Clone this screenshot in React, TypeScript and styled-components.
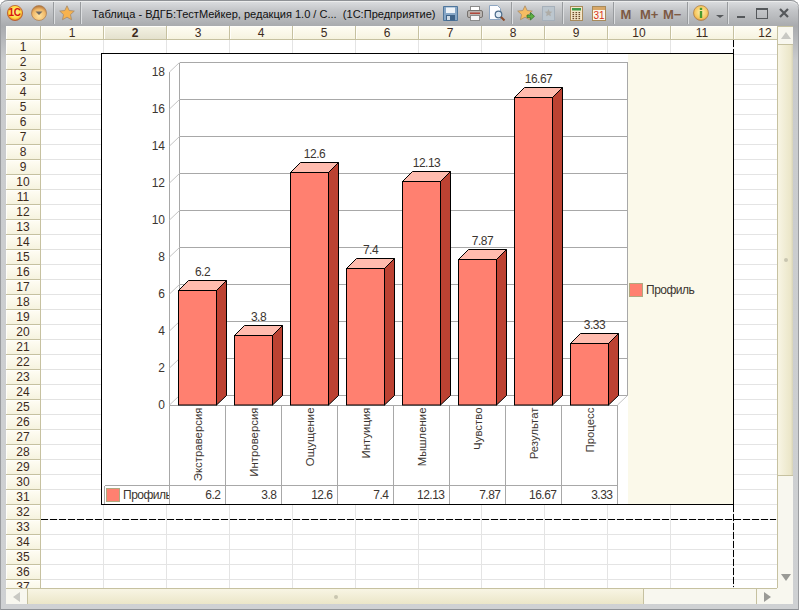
import React from "react";
import styled, { createGlobalStyle } from "styled-components";

const Global = createGlobalStyle`
  html, body { margin: 0; padding: 0; background: #fff; width: 799px; height: 610px; overflow: hidden; }
  #root { width: 799px; height: 610px; }
`;

const Window = styled.div`
  width: 799px;
  height: 610px;
  box-sizing: border-box;
  display: flex;
  flex-direction: column;
  border-radius: 8px 8px 0 0;
  overflow: hidden;
  background: linear-gradient(180deg, #dfe1e3 0, #c4c6c9 10px, #a9abae 26px, #c9cbcd 60px, #cfd1d3 100%);
  box-shadow: inset 0 1px 0 #8f9296, inset 0 2px 0 #eceded, inset 1px 0 0 #9a9c9f, inset -1px 0 0 #9a9c9f, inset 0 -1px 0 #8f9296;
  font-family: "Liberation Sans", Arial, sans-serif;
`;

const TitleBar = styled.div`
  height: 26px;
  flex: none;
  display: flex;
  align-items: center;
  position: relative;
`;

const Slot = styled.div<{ $ml: number; $w: number }>`
  flex: none;
  margin-left: ${(p) => p.$ml}px;
  width: ${(p) => p.$w}px;
  height: 22px;
  display: flex;
  align-items: center;
  justify-content: center;
`;

const Separator = styled.div<{ $ml: number }>`
  flex: none;
  margin-left: ${(p) => p.$ml}px;
  width: 1px;
  height: 22px;
  background: #989b9e;
  box-shadow: 1px 0 0 #dcdee0;
`;

const Title = styled.div`
  flex: none;
  margin-left: 10px;
  width: 352px;
  font-size: 11.05px;
  color: #101010;
  white-space: pre;
  padding-top: 2px;
  text-indent: 1px;
`;

const MemButton = styled.div<{ $ml: number; $w: number }>`
  flex: none;
  margin-left: ${(p) => p.$ml}px;
  width: ${(p) => p.$w}px;
  font-size: 13px;
  font-weight: 700;
  color: #7d5a44;
  text-align: center;
  white-space: nowrap;
  padding-top: 2px;
`;

const Body = styled.div`
  flex: 1;
  display: flex;
  flex-direction: column;
  margin: 0 6px 6px;
  min-height: 0;
`;

const MainRow = styled.div`
  flex: none;
  height: 562px;
  display: flex;
`;

const Viewport = styled.div`
  position: relative;
  width: 771px;
  height: 562px;
  overflow: hidden;
  background: #fff;
  flex: none;
`;

const GridRow = styled.div<{ $h: number }>`
  display: flex;
  height: ${(p) => p.$h}px;
`;

const Head = styled.div<{ $w: number; $active?: boolean }>`
  flex: none;
  box-sizing: border-box;
  width: ${(p) => p.$w}px;
  display: flex;
  align-items: center;
  justify-content: center;
  border-right: 1px solid #c6c1a0;
  border-bottom: 1px solid #c6c1a0;
  background: ${(p) =>
    p.$active
      ? "linear-gradient(180deg, #f4f2e4, #e4e1cd)"
      : "linear-gradient(180deg, #fffdf4, #f6f3df)"};
  box-shadow: inset 1px 1px 0 #fffef9;
  color: #3c2a1c;
  font-size: 12px;
  font-weight: ${(p) => (p.$active ? 700 : 400)};
  line-height: 1;
`;

const Cell = styled.div`
  flex: none;
  box-sizing: border-box;
  width: 63px;
  border-right: 1px solid #e4e4e4;
  border-bottom: 1px solid #e4e4e4;
`;

const ChartFrame = styled.div`
  position: absolute;
  left: 95px;
  top: 27px;
  width: 633px;
  height: 452px;
  box-sizing: border-box;
  border: 1px solid #000;
  background: #fff;
`;

const ChartSvg = styled.svg`
  display: block;
  width: 631px;
  height: 450px;
  font-family: "Liberation Sans", Arial, sans-serif;
`;

const Label = styled.text`
  font-size: 12px;
  letter-spacing: -0.5px;
  fill: #3b3530;
`;

const NameLabel = styled(Label)`
  font-size: 11.4px;
  letter-spacing: 0;
`;

const AxisLabel = styled(Label)`
  letter-spacing: 0;
`;

const DashH = styled.div`
  position: absolute;
  left: 35px;
  top: 493px;
  width: 735px;
  height: 1px;
  background: repeating-linear-gradient(90deg, #000 0 7px, transparent 7px 9px);
`;

const DashV = styled.div<{ $top: number; $h: number }>`
  position: absolute;
  left: 727px;
  top: ${(p) => p.$top}px;
  height: ${(p) => p.$h}px;
  width: 1px;
  background: repeating-linear-gradient(180deg, #000 0 7px, transparent 7px 9px);
`;

const VScroll = styled.div`
  flex: none;
  width: 16px;
  display: flex;
  flex-direction: column;
  background: #f8f7ef;
  border-left: 1px solid #c6c1a0;
  box-sizing: border-box;
`;

const HScroll = styled.div`
  flex: none;
  width: 771px;
  height: 16px;
  display: flex;
  background: #f8f7ef;
  border-top: 1px solid #c6c1a0;
  box-sizing: border-box;
`;

const Corner = styled.div`
  flex: none;
  width: 16px;
  height: 16px;
  background: #f8f7ef;
`;

const BottomRow = styled.div`
  display: flex;
  height: 16px;
  flex: none;
`;

const ScrollBtn = styled.div<{ $size: number; $vertical?: boolean }>`
  flex: none;
  ${(p) => (p.$vertical ? `height: ${p.$size}px;` : `width: ${p.$size}px;`)}
  display: flex;
  align-items: center;
  justify-content: center;
  box-sizing: border-box;
  background: #f8f7ef;
`;

const HThumb = styled.div`
  flex: none;
  width: 617px;
  display: flex;
  align-items: center;
  justify-content: center;
  box-sizing: border-box;
  border-left: 1px solid #c6c1a0;
  border-right: 1px solid #c6c1a0;
  background: linear-gradient(180deg, #f8f5e4, #ebe6c8);
`;

const VThumb = styled.div`
  flex: none;
  height: 432px;
  display: flex;
  align-items: center;
  justify-content: center;
  box-sizing: border-box;
  border-top: 1px solid #c6c1a0;
  border-bottom: 1px solid #c6c1a0;
  background: linear-gradient(90deg, #f8f5e4, #ebe6c8 85%, #d6d2b8);
`;

const Track = styled.div`
  flex: 1;
  background: #f8f7ef;
`;

const BtnEnd = styled(ScrollBtn)<{ $side: "left" | "top" }>`
  border-${(p) => p.$side}: 1px solid #c6c1a0;
`;

const Grip = styled.div`
  width: 4px;
  height: 4px;
  border-radius: 50%;
  background: #c9c6b0;
`;

const Arrow = styled.div<{ $dir: "up" | "down" | "left" | "right" }>`
  width: 0;
  height: 0;
  ${(p) =>
    p.$dir === "up"
      ? "border-left:5px solid transparent;border-right:5px solid transparent;border-bottom:7px solid #c9c9c4;"
      : p.$dir === "down"
      ? "border-left:5px solid transparent;border-right:5px solid transparent;border-top:7px solid #9a9a96;"
      : p.$dir === "left"
      ? "border-top:5px solid transparent;border-bottom:5px solid transparent;border-right:7px solid #c9c9c4;"
      : "border-top:5px solid transparent;border-bottom:5px solid transparent;border-left:7px solid #9a9a96;"}
`;

const RedLogoText = styled.text`
  font-size: 10px;
  font-weight: 700;
  letter-spacing: -0.5px;
  fill: #d8140f;
  font-family: "Liberation Sans", Arial, sans-serif;
`;

const CalText = styled.text`
  font-size: 10px;
  font-weight: 400;
  fill: #d8301a;
  font-family: "Liberation Sans", Arial, sans-serif;
`;

/* ---------- icons ---------- */
const Logo = () => (
  <svg width="16" height="16" viewBox="0 0 16 16">
    <defs>
      <radialGradient id="lg" cx="50%" cy="45%" r="55%">
        <stop offset="0" stopColor="#fff59a" />
        <stop offset="0.72" stopColor="#ffd840" />
        <stop offset="1" stopColor="#d8641e" />
      </radialGradient>
    </defs>
    <circle cx="8" cy="8" r="7.6" fill="url(#lg)" stroke="#b8501c" strokeWidth="0.7" />
    <RedLogoText x="1.6" y="11.4">1С</RedLogoText>
  </svg>
);

const MenuOrb = () => (
  <svg width="16" height="16" viewBox="0 0 16 16">
    <defs>
      <radialGradient id="mo" cx="50%" cy="70%" r="65%">
        <stop offset="0" stopColor="#ffe3a0" />
        <stop offset="0.7" stopColor="#f0b868" />
        <stop offset="1" stopColor="#b87a3e" />
      </radialGradient>
    </defs>
    <circle cx="8" cy="8" r="7.5" fill="url(#mo)" stroke="#a87a50" strokeWidth="0.7" />
    <path d="M4.5 6.5h7L8 10z" fill="#6e6a66" />
  </svg>
);

const Star = ({ fill = "#f6b24e", stroke = "#a68a6a" }: { fill?: string; stroke?: string }) => (
  <svg width="16" height="16" viewBox="0 0 16 16">
    <path
      d="M8 .8l2.2 4.7 5.1.6-3.8 3.5 1 5.1L8 12.2l-4.5 2.5 1-5.1L.7 6.1l5.1-.6z"
      fill={fill}
      stroke={stroke}
      strokeWidth="0.8"
    />
  </svg>
);

const StarArrow = () => (
  <svg width="18" height="17" viewBox="0 0 18 17">
    <path
      d="M8 .8l2.2 4.7 5.1.6-3.8 3.5 1 5.1L8 12.2l-4.5 2.5 1-5.1L.7 6.1l5.1-.6z"
      fill="#f6bc62"
      stroke="#a68a6a"
      strokeWidth="0.8"
    />
    <path d="M10 10h3.5V7.6l4 3.7-4 3.7v-2.4H10z" fill="#5cb040" stroke="#2e6e24" strokeWidth="0.7" />
  </svg>
);

const DisabledStar = () => (
  <svg width="13" height="15" viewBox="0 0 13 15">
    <rect x="0.5" y="0.5" width="12" height="14" fill="#bcc6ce" stroke="#a6b0ba" />
    <path d="M6.5 3l1.1 2.5 2.7.3-2 1.8.5 2.7-2.3-1.3-2.3 1.3.5-2.7-2-1.8 2.7-.3z" fill="#aeaca6" />
  </svg>
);

const Floppy = () => (
  <svg width="15" height="15" viewBox="0 0 15 15">
    <path d="M.5.5h14v14H.5z" fill="#86a6c6" stroke="#4f769c" />
    <rect x="3" y="1.5" width="9" height="5.5" fill="#eef3f8" />
    <rect x="3" y="9" width="9" height="5.5" fill="#3f6388" />
    <rect x="4" y="10" width="3" height="4" fill="#cfdbe6" />
  </svg>
);

const Printer = () => (
  <svg width="16" height="15" viewBox="0 0 16 15">
    <rect x="3.5" y="0.5" width="9" height="5" fill="#fff" stroke="#8b8b8b" />
    <rect x="0.5" y="4.5" width="15" height="7" rx="1.5" fill="#b9b4b0" stroke="#76716d" />
    <rect x="3" y="6.5" width="10" height="1.5" fill="#b0473a" />
    <rect x="3.5" y="9.5" width="9" height="5" fill="#f6f6f6" stroke="#8b8b8b" />
  </svg>
);

const Preview = () => (
  <svg width="17" height="16" viewBox="0 0 17 16">
    <path d="M.5.5h8l3 3v11H.5z" fill="#fdfdff" stroke="#8ea6c2" />
    <circle cx="9.5" cy="9.5" r="3.3" fill="#dfeaf5" stroke="#4a6a8a" strokeWidth="1.2" />
    <path d="M12 12l3.5 3.5" stroke="#8a4a2a" strokeWidth="2" />
  </svg>
);

const Calculator = () => (
  <svg width="13" height="15" viewBox="0 0 13 15">
    <rect x="0.5" y="0.5" width="12" height="14" fill="#f5e6c8" stroke="#a88a5a" />
    <rect x="2" y="2" width="9" height="2.5" fill="#3f9a4a" />
    {[0, 1, 2, 3].map((r) =>
      [0, 1, 2].map((c) => (
        <rect key={`${r}${c}`} x={2.5 + c * 3} y={6 + r * 2} width="1.6" height="1.2" fill="#6a4a2a" />
      ))
    )}
  </svg>
);

const Calendar = () => (
  <svg width="14" height="15" viewBox="0 0 14 15">
    <rect x="0.5" y="0.5" width="13" height="14" fill="#fbf6e8" stroke="#a88a5a" />
    <rect x="1" y="1" width="12" height="3" fill="#d8a868" />
    <CalText x="1.5" y="13.4">31</CalText>
  </svg>
);

const Info = () => (
  <svg width="16" height="16" viewBox="0 0 16 16">
    <defs>
      <radialGradient id="inf" cx="50%" cy="45%" r="60%">
        <stop offset="0" stopColor="#fff2b0" />
        <stop offset="0.7" stopColor="#f6c65e" />
        <stop offset="1" stopColor="#c8843a" />
      </radialGradient>
    </defs>
    <circle cx="8" cy="8" r="7.5" fill="url(#inf)" stroke="#ab7a42" strokeWidth="0.7" />
    <rect x="6.8" y="2.8" width="2.4" height="2.2" fill="#4a9a2e" />
    <rect x="6.8" y="6" width="2.4" height="7" fill="#4a9a2e" />
  </svg>
);

const DownTriangle = () => (
  <svg width="8" height="10" viewBox="0 0 8 10">
    <path d="M0 7h8L4 10z" fill="#55585b" />
  </svg>
);

const MinGlyph = () => (
  <svg width="8" height="11" viewBox="0 0 8 11">
    <rect x="0" y="8" width="8" height="2" fill="#55585b" />
  </svg>
);

const MaxGlyph = () => (
  <svg width="12" height="11" viewBox="0 0 12 11">
    <rect x="0.5" y="0.5" width="11" height="10" fill="none" stroke="#55585b" />
    <rect x="0.5" y="0.5" width="11" height="1.5" fill="#55585b" />
  </svg>
);

const CloseGlyph = () => (
  <svg width="10" height="10" viewBox="0 0 10 10">
    <path d="M1 1l8 8M9 1l-8 8" stroke="#55585b" strokeWidth="2.2" />
  </svg>
);

/* ---------- chart ---------- */
const data = [
  { name: "Экстраверсия", value: 6.2 },
  { name: "Интроверсия", value: 3.8 },
  { name: "Ощущение", value: 12.6 },
  { name: "Интуиция", value: 7.4 },
  { name: "Мышление", value: 12.13 },
  { name: "Чувство", value: 7.87 },
  { name: "Результат", value: 16.67 },
  { name: "Процесс", value: 3.33 },
];

const GRID = "#a8a8a8";
const FRONT_Y = 405;
const UNIT = 18.5;
const barTop = (v: number) => Math.round(FRONT_Y - v * UNIT) + 0.5;

const Chart = () => (
  <ChartSvg viewBox="102 54 631 450">
    <rect x="628" y="54" width="105" height="450" fill="#fbf9ea" />
    <g stroke={GRID} fill="none" shapeRendering="crispEdges">
      {Array.from({ length: 10 }, (_, i) => (
        <path key={i} d={`M179.5 ${395.5 - i * 37}H627.5`} />
      ))}
      <path d="M179.5 62.5V395.5M627.5 62.5V395.5M169.5 72V405" />
      <path d="M104.5 485.5H617.5M104.5 485.5V504" />
      {Array.from({ length: 9 }, (_, i) => (
        <path key={i} d={`M${169.5 + i * 56} 405V504`} />
      ))}
      <path d="M169.5 405.5H617.5" />
    </g>
    <g stroke="#c4c4c4" fill="none">
      {Array.from({ length: 10 }, (_, i) => (
        <path key={i} d={`M169.5 ${405 - i * 37}L179.5 ${395.5 - i * 37}`} />
      ))}
      <path d="M617.5 405L627.5 395.5" />
    </g>
    {Array.from({ length: 10 }, (_, i) => (
      <AxisLabel key={i} x="165" y={409 - i * 37} textAnchor="end">
        {i * 2}
      </AxisLabel>
    ))}
    {data.map((d, i) => {
      const x = 178.5 + 56 * i;
      const top = barTop(d.value);
      return (
        <g key={d.name} stroke="#000" strokeWidth="1">
          <path
            d={`M${x + 38} ${top}L${x + 48} ${top - 10}V${395.5}L${x + 38} ${FRONT_Y}z`}
            fill="#bc4232"
          />
          <path
            d={`M${x} ${top}L${x + 10} ${top - 10}H${x + 48}L${x + 38} ${top}z`}
            fill="#ffbbae"
          />
          <rect x={x} y={top} width="38" height={FRONT_Y - top} fill="#ff8070" />
        </g>
      );
    })}
    {data.map((d, i) => (
      <Label key={d.name} x={202.5 + 56 * i} y={barTop(d.value) - 14.5} textAnchor="middle">
        {d.value}
      </Label>
    ))}
    {data.map((d, i) => (
      <NameLabel
        key={d.name}
        transform={`translate(${202 + 56 * i} 407.5) rotate(-90)`}
        textAnchor="end"
      >
        {d.name}
      </NameLabel>
    ))}
    <rect x="106.5" y="488.5" width="13" height="13" fill="#ff8070" stroke="#b0a880" />
    <clipPath id="legendClip">
      <rect x="120" y="486" width="49" height="18" />
    </clipPath>
    <Label x="123" y="499" clipPath="url(#legendClip)">
      Профиль
    </Label>
    {data.map((d, i) => (
      <Label key={d.name} x={220.5 + 56 * i} y="499" textAnchor="end">
        {d.value}
      </Label>
    ))}
    <rect x="629.5" y="283.5" width="13" height="13" fill="#ff8070" stroke="#b0a880" />
    <Label x="646" y="293.5">
      Профиль
    </Label>
  </ChartSvg>
);

const cols = Array.from({ length: 12 }, (_, i) => i + 1);
const rows = Array.from({ length: 37 }, (_, i) => i + 1);

export default function App() {
  return (
    <Window>
      <Global />
      <TitleBar>
        <Slot $ml={7} $w={16}><Logo /></Slot>
        <Slot $ml={8} $w={16}><MenuOrb /></Slot>
        <Separator $ml={6} />
        <Slot $ml={5} $w={16}><Star /></Slot>
        <Separator $ml={5} />
        <Title>{"Таблица - ВДГБ:ТестМейкер, редакция 1.0 / С...  (1С:Предприятие)"}</Title>
        <Slot $ml={0} $w={15}><Floppy /></Slot>
        <Slot $ml={9} $w={16}><Printer /></Slot>
        <Slot $ml={6} $w={17}><Preview /></Slot>
        <Separator $ml={5} />
        <Slot $ml={5} $w={18}><StarArrow /></Slot>
        <Slot $ml={7} $w={13}><DisabledStar /></Slot>
        <Separator $ml={7} />
        <Slot $ml={7} $w={13}><Calculator /></Slot>
        <Slot $ml={9} $w={14}><Calendar /></Slot>
        <Separator $ml={7} />
        <MemButton $ml={5} $w={14}>M</MemButton>
        <MemButton $ml={7} $w={18}>M+</MemButton>
        <MemButton $ml={5} $w={18}>M−</MemButton>
        <Separator $ml={6} />
        <Slot $ml={5} $w={16}><Info /></Slot>
        <Slot $ml={7} $w={8}><DownTriangle /></Slot>
        <Separator $ml={3} />
        <Slot $ml={9} $w={8}><MinGlyph /></Slot>
        <Slot $ml={11} $w={12}><MaxGlyph /></Slot>
        <Slot $ml={11} $w={10}><CloseGlyph /></Slot>
      </TitleBar>
      <Body>
        <MainRow>
          <Viewport>
            <GridRow $h={14}>
              <Head $w={35} />
              {cols.map((c) => (
                <Head key={c} $w={63} $active={c === 2}>{c}</Head>
              ))}
            </GridRow>
            {rows.map((r) => (
              <GridRow key={r} $h={15}>
                <Head $w={35}>{r}</Head>
                {cols.map((c) => (
                  <Cell key={c} />
                ))}
              </GridRow>
            ))}
            <ChartFrame>
              <Chart />
            </ChartFrame>
            <DashH />
            <DashV $top={14} $h={13} />
            <DashV $top={479} $h={82} />
          </Viewport>
          <VScroll>
            <BtnEnd $side="top" $size={18} $vertical><Arrow $dir="up" /></BtnEnd>
            <VThumb><Grip /></VThumb>
            <Track />
            <ScrollBtn $size={21} $vertical><Arrow $dir="down" /></ScrollBtn>
          </VScroll>
        </MainRow>
        <BottomRow>
          <HScroll>
            <ScrollBtn $size={21}><Arrow $dir="left" /></ScrollBtn>
            <HThumb><Grip /></HThumb>
            <Track />
            <BtnEnd $side="left" $size={21}><Arrow $dir="right" /></BtnEnd>
          </HScroll>
          <Corner />
        </BottomRow>
      </Body>
    </Window>
  );
}
